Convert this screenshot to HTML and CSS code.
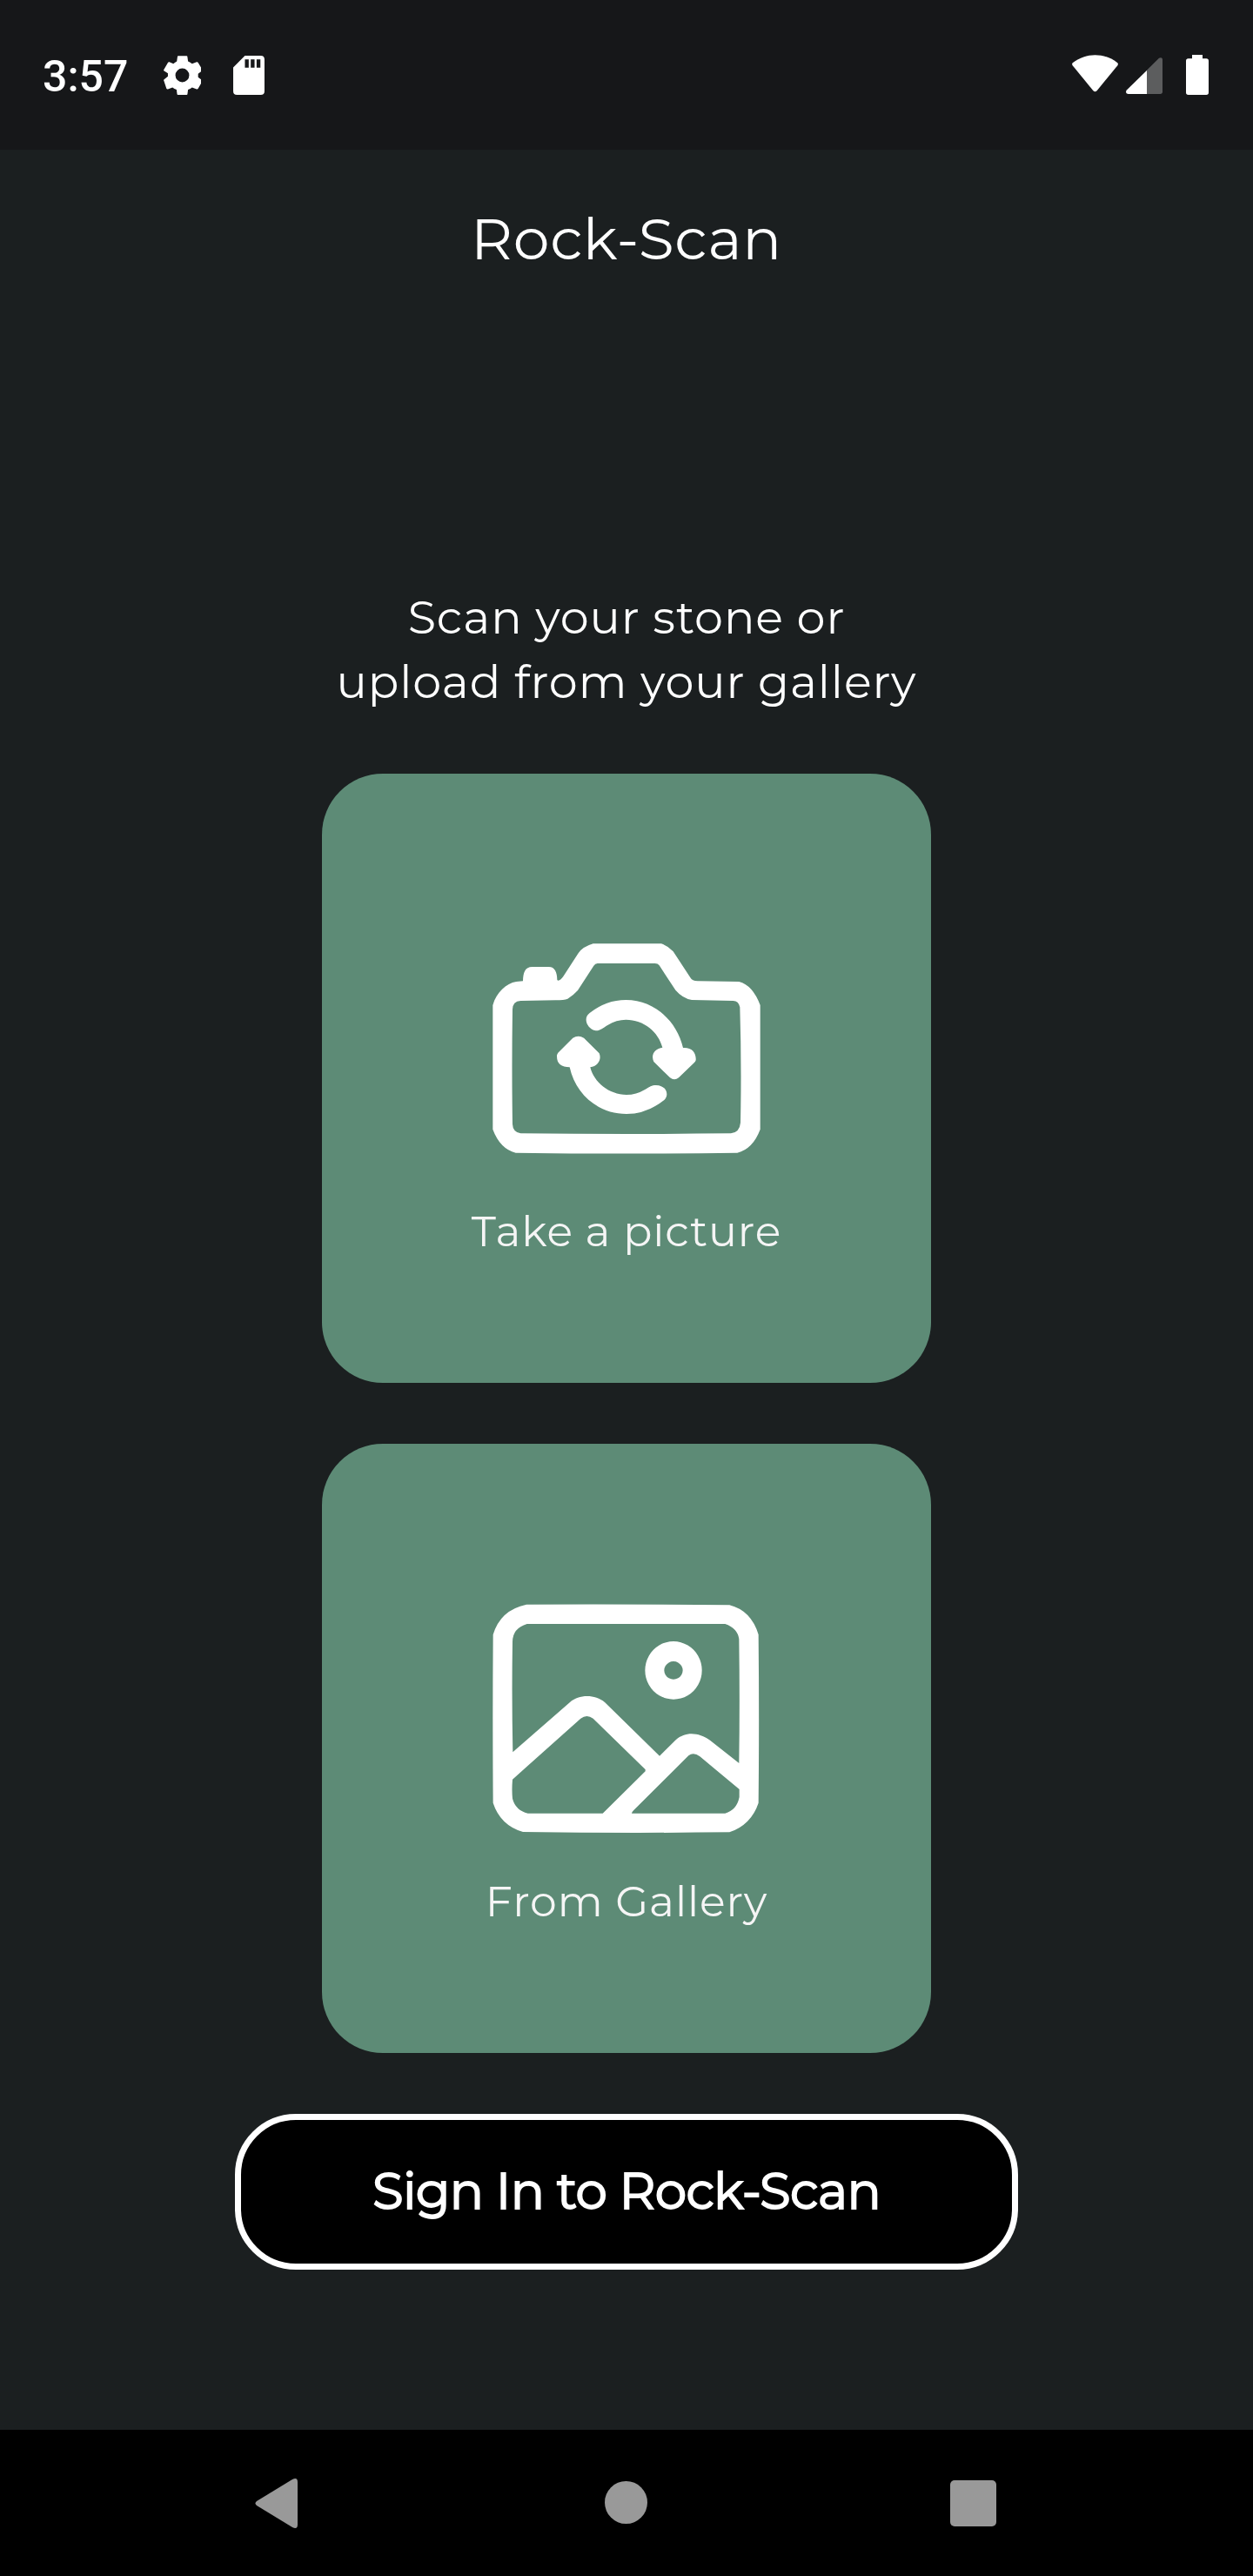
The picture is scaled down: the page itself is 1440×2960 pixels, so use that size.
FILE: index.html
```html
<!DOCTYPE html>
<html lang="en">
<head>
<meta charset="utf-8">
<title>Rock-Scan</title>
<link rel="stylesheet" href="styles.css">
</head>
<body>
<div class="screen">
  <header class="status">
    <div class="status-left">
      <span class="time">3:57</span>
      <svg class="gear" viewBox="0 0 130 134"><path fill-rule="evenodd" d="M50 0h30q3 0 3 4l2 15q8 3 14 8l16-6q3-1 5 2l14 24q2 3-1 5l-13 10v12l13 10q3 2 1 5l-14 24q-2 3-5 2l-16-6q-6 5-14 8l-2 15q0 3-3 3H50q-3 0-3-3l-2-15q-8-3-14-8l-16 6q-3 1-5-2L1 86q-2-3 1-5l13-10V60L2 52q-3-2-1-5l14-24q2-3 5-2l14 6q6-5 12-8l2-15q0-4 3-4ZM65 43a24 24 0 1 0 0 48 24 24 0 0 0 0-48Z"/></svg>
      <svg class="sdcard" viewBox="0 0 107 134"><path fill-rule="evenodd" d="M40 0h54q13 0 13 13v108q0 13-13 13H13q-13 0-13-13V40ZM40 13v28h13V13ZM60 13v28h13V13ZM80 13v28h13V13Z"/></svg>
    </div>
    <div class="status-right">
      <svg class="wifi" viewBox="0 0 160 128"><path d="M3 26C50-9 110-9 157 26q5 4 1 10L87 123q-7 8-14 0L2 36q-4-6 1-10Z"/></svg>
      <svg class="signal" viewBox="0 0 126 126"><path opacity=".3" d="M114 2q12-5 12 7v109q0 8-8 8H8q-12-2-6-13Z"/><path d="M72 45v81H8q-12-2-6-13Z"/></svg>
      <svg class="battery" viewBox="0 0 78 138"><path d="M21 0h36v13h13q8 0 8 8v109q0 8-8 8H8q-8 0-8-8V21q0-8 8-8h13Z"/></svg>
    </div>
  </header>

  <main class="content">
    <h1 class="title">Rock-Scan</h1>
    <p class="prompt">Scan your stone or<br>upload from your gallery</p>

    <button class="card">
      <svg class="card-icon" viewBox="0 -30 1080 1005">
        <path fill-rule="evenodd" d="M79 285C92 240 125 210 160 204L183 202C184 172 190 153 215 153H272C293 153 301 172 301 198Q308 205 322 186L374 106Q388 84 425 73H660Q682 80 701 100L760 190Q766 202 785 202L928 204Q975 216 1001 285V713Q976 780 922 794Q540 799 158 794Q104 780 79 713ZM175 270Q147 272 147 300Q144 495 147 695Q148 722 175 727Q540 731 900 727Q930 724 933 690Q937 490 931 292Q926 270 908 270L765 267Q733 261 709 233L653 148Q648 141 638 141H440Q432 141 427 149L372 234Q356 252 337 263Q325 268 295 268Z"/>
        <path d="M434 373C405 367 388 330 413 312Q470 267 538 267C636 267 714 340 735 432C765 430 781 448 779 475Q778 480 773 484L720 535Q705 547 690 535L634 480C622 453 640 434 664 431C650 377 600 335 538 335Q505 335 475 354C460 363 448 374 434 373Z"/>
        <path d="M344 499C315 498 299 488 300 458Q301 453 304 449L355 398Q374 386 393 398L446 451C455 472 442 496 415 499C427 550 480 594 540 594Q573 594 605 575C620 567 626 561 642 561C675 561 690 592 670 612Q610 660 540 660C442 660 364 592 344 499Z"/>
      </svg>
      <span class="card-label">Take a picture</span>
    </button>

    <button class="card">
      <svg class="card-icon" viewBox="0 0 1080 1005">
        <path fill-rule="evenodd" d="M195 71Q540 69 895 73Q970 92 995 175Q998 465 995 755Q970 830 895 856Q540 860 183 855Q105 832 80 755Q78 465 80 175Q105 90 195 71ZM197 138Q147 153 147 200Q144 390 148 580L345 408C376 380 432 380 465 408L654 593L710 538C745 507 790 513 828 539L928 618Q931 405 928 190Q923 153 880 138ZM147 674Q144 710 147 740Q157 780 200 791H458L605 646V640L425 464Q403 448 382 464ZM558 791H880Q920 780 929 735V708L793 595Q771 578 754 592L565 780Q558 786 558 791Z"/>
        <path fill-rule="evenodd" d="M702 198a98 100 0 1 0 .1 0ZM702 267a32 31 0 1 1-.1 0Z"/>
      </svg>
      <span class="card-label">From Gallery</span>
    </button>

    <button class="signin"><span class="signin-label">Sign In to Rock-Scan</span></button>
  </main>

  <nav class="navbar">
    <svg class="nav-back" viewBox="0 0 49 57"><path d="M43 1q6-3 6 3v49q0 6-6 3L2 31q-3-2.500 0-5Z"/></svg>
    <svg class="nav-home" viewBox="0 0 49 49"><circle cx="24.500" cy="24.500" r="24.500"/></svg>
    <svg class="nav-recent" viewBox="0 0 53 53"><rect width="53" height="53" rx="5"/></svg>
  </nav>
</div>
</body>
</html>
```
FILE: styles.css
```css
* {
  box-sizing: border-box;
}

body {
  margin: 0;
  background: #1b1f20;
  color: #fff;
  font-family: "Montserrat", Inter, sans-serif;
}

svg {
  display: block;
  fill: currentColor;
  flex: none;
}

button {
  border: 0;
  padding: 0;
  color: inherit;
  font: inherit;
}

.screen {
  width: 1440px;
  height: 2960px;
  display: flex;
  flex-direction: column;
  overflow: hidden;
}

.status {
  height: 172px;
  flex: none;
  display: flex;
  justify-content: space-between;
  padding: 0 51px 0 49px;
  background: #161719;
}

.status-left,
.status-right {
  display: flex;
  align-items: flex-start;
}

.time {
  width: 139px;
  margin-top: 58px;
  font: 500 50px/60px Roboto, sans-serif;
}

.gear {
  width: 43px;
  height: 45px;
  margin-top: 64px;
}

.sdcard {
  width: 36px;
  height: 45px;
  margin: 64px 0 0 37px;
}

.wifi {
  width: 53px;
  height: 43px;
  margin-top: 63px;
}

.signal {
  width: 42px;
  height: 42px;
  margin: 66px 27px 0 9px;
}

.battery {
  width: 26px;
  height: 46px;
  margin-top: 63px;
}

.content {
  flex: 1;
  display: flex;
  flex-direction: column;
  align-items: center;
}

.title {
  margin: 0 0 294px;
  font-size: 66.500px;
  font-weight: 400;
  line-height: 206px;
  letter-spacing: 0.700px;
  white-space: nowrap;
}

.prompt {
  margin: 0 0 69px;
  font-size: 52.500px;
  font-weight: 400;
  line-height: 74px;
  letter-spacing: 0.900px;
  text-align: center;
  white-space: nowrap;
}

.card {
  width: 700px;
  height: 700px;
  margin-bottom: 70px;
  padding-top: 161px;
  border-radius: 70px;
  background: #5d8b76;
  display: flex;
  flex-direction: column;
  align-items: center;
}

.card-icon {
  width: 360px;
  height: 335px;
}

.card-label {
  color: #f5f5f5;
  font-size: 49px;
  font-weight: 400;
  line-height: 60px;
  letter-spacing: 0.900px;
  white-space: nowrap;
}

.signin {
  width: 900px;
  height: 179px;
  padding-bottom: 2px;
  border: 7px solid #fff;
  border-radius: 70px;
  background: #000;
  display: flex;
  align-items: center;
  justify-content: center;
}

.signin-label {
  font-size: 58px;
  font-weight: 400;
  line-height: 70px;
  letter-spacing: -0.700px;
  -webkit-text-stroke: 1.800px #fff;
  white-space: nowrap;
}

.navbar {
  height: 168px;
  flex: none;
  display: flex;
  align-items: center;
  justify-content: space-between;
  padding: 0 295px 0 293px;
  background: #000;
  color: #999;
}

.nav-back {
  width: 49px;
  height: 57px;
}

.nav-home {
  width: 49px;
  height: 49px;
  margin: 0 0 1px 5px;
}

.nav-recent {
  width: 53px;
  height: 53px;
}
```
